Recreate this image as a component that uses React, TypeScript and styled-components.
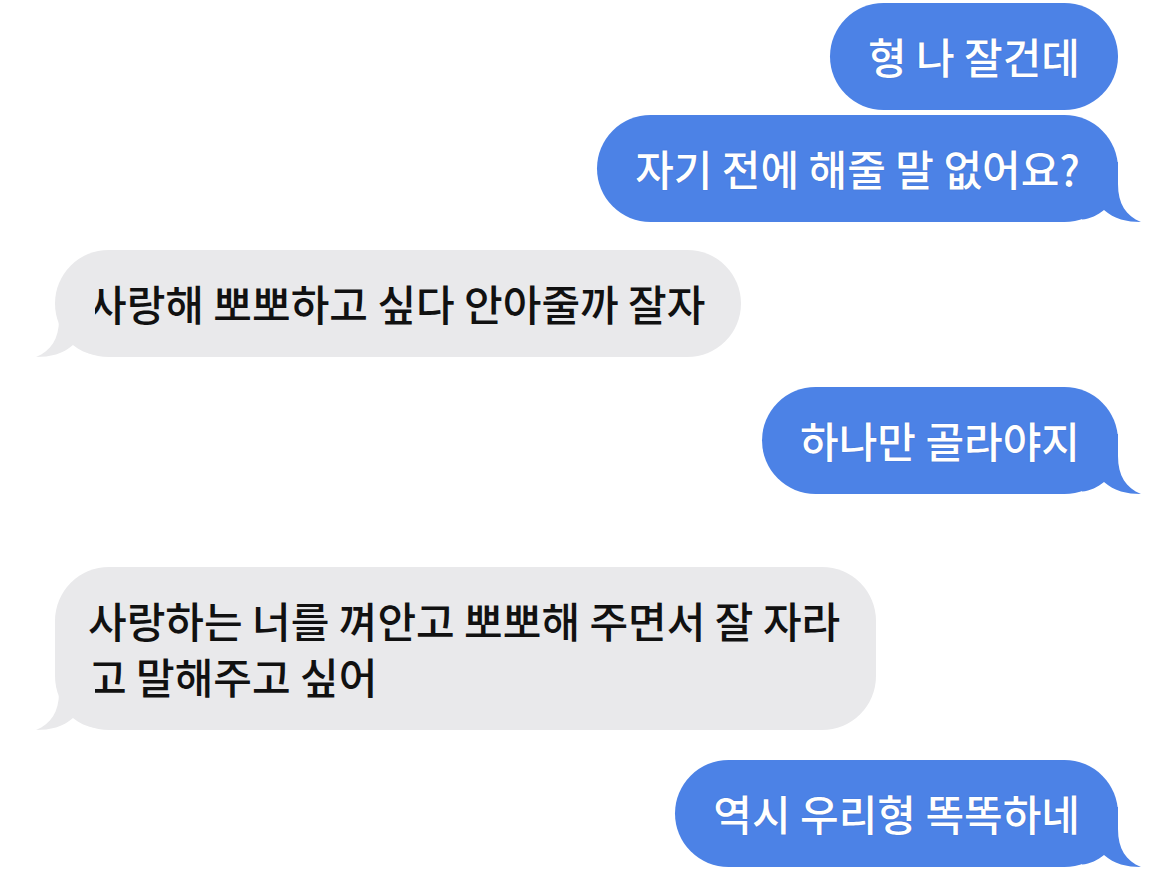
import React from 'react';
import styled, { createGlobalStyle } from 'styled-components';

const GlobalStyle = createGlobalStyle`
  html, body {
    margin: 0;
    padding: 0;
    background: #ffffff;
  }
  body {
    font-family: "Noto Sans CJK KR", "Noto Sans", sans-serif;
  }
`;

const BLUE = '#4c82e6';
const GRAY = '#e9e9eb';

const Thread = styled.div`
  display: flex;
  flex-direction: column;
  width: 1170px;
  height: 875px;
  box-sizing: border-box;
  padding: 3px 52px 0 55px;
  overflow: hidden;
`;

type BubbleProps = {
  $mine: boolean;
  $gap: number;
};

const Bubble = styled.div<BubbleProps>`
  position: relative;
  align-self: ${({ $mine }) => ($mine ? 'flex-end' : 'flex-start')};
  margin-top: ${({ $gap }) => $gap}px;
  padding: 25px ${({ $mine }) => ($mine ? '38px 26px 38px' : '36px 26px 33px')};
  border-radius: 54px;
  background: ${({ $mine }) => ($mine ? BLUE : GRAY)};
  color: ${({ $mine }) => ($mine ? '#ffffff' : '#111111')};
  font-size: 42px;
  font-weight: 500;
  line-height: 56px;
  white-space: nowrap;
  text-shadow: ${({ $mine }) => ($mine ? '0 0 1px rgba(30, 50, 110, 0.45)' : 'none')};
`;

const Tail = styled.svg<{ $mine: boolean }>`
  position: absolute;
  bottom: 0;
  width: 60px;
  height: 60px;
  ${({ $mine }) => ($mine ? 'right: -24px;' : 'left: -20px; transform: scaleX(-1);')}
`;

function BubbleTail({ mine }: { mine: boolean }): React.ReactElement {
  return (
    <Tail $mine={mine} viewBox="0 0 60 60" aria-hidden="true">
      <path
        d="M0 0 H36 V22 C36 42 44 54 59 60 C45 60 32 57 22 48 C16 53 8 57 0 57.5 Z"
        fill={mine ? BLUE : GRAY}
      />
    </Tail>
  );
}

type Message = {
  mine: boolean;
  gap: number;
  tail: boolean;
  lines: string[];
};

const messages: Message[] = [
  { mine: true, gap: 0, tail: false, lines: ['형 나 잘건데'] },
  { mine: true, gap: 5, tail: true, lines: ['자기 전에 해줄 말 없어요?'] },
  { mine: false, gap: 28, tail: true, lines: ['사랑해 뽀뽀하고 싶다 안아줄까 잘자'] },
  { mine: true, gap: 30, tail: true, lines: ['하나만 골라야지'] },
  {
    mine: false,
    gap: 73,
    tail: true,
    lines: ['사랑하는 너를 껴안고 뽀뽀해 주면서 잘 자라', '고 말해주고 싶어'],
  },
  { mine: true, gap: 30, tail: true, lines: ['역시 우리형 똑똑하네'] },
];

export default function App(): React.ReactElement {
  return (
    <>
      <GlobalStyle />
      <Thread>
        {messages.map((m, i) => (
          <Bubble key={i} $mine={m.mine} $gap={m.gap}>
            {m.tail && <BubbleTail mine={m.mine} />}
            {m.lines.map((line, j) => (
              <React.Fragment key={j}>
                {j > 0 && <br />}
                {line}
              </React.Fragment>
            ))}
          </Bubble>
        ))}
      </Thread>
    </>
  );
}
